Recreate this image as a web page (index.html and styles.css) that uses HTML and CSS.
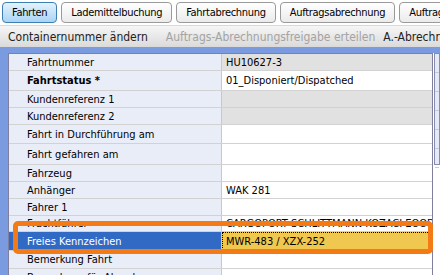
FILE: index.html
```html
<!DOCTYPE html>
<html lang="de">
<head>
    <meta charset="UTF-8">
    <title>Fahrten</title>
    <link rel="stylesheet" href="styles.css">
</head>
<body>
    <div class="app">
        <div class="tabs">
            <div class="tab active">Fahrten</div>
            <div class="tab">Lademittelbuchung</div>
            <div class="tab">Fahrtabrechnung</div>
            <div class="tab">Auftragsabrechnung</div>
            <div class="tab">Auftragsabrechnung</div>
        </div>
        <div class="toolbar">
            <span class="tool">Containernummer ändern</span>
            <span class="sep"></span>
            <span class="tool disabled">Auftrags-Abrechnungsfreigabe erteilen</span>
            <span class="tool">A.-Abrechnung</span>
        </div>
        <div class="frame">
            <div class="grid">
                <div class="row h17"><div class="label">Fahrtnummer</div><div class="value ro">HU10627-3</div></div>
                <div class="row h20"><div class="label bold">Fahrtstatus *</div><div class="value">01_Disponiert/Dispatched</div></div>
                <div class="row h17"><div class="label">Kundenreferenz 1</div><div class="value ro"></div></div>
                <div class="row h17"><div class="label">Kundenreferenz 2</div><div class="value ro"></div></div>
                <div class="row h19"><div class="label">Fahrt in Durchführung am</div><div class="value"></div></div>
                <div class="row h21"><div class="label">Fahrt gefahren am</div><div class="value"></div></div>
                <div class="row h17"><div class="label">Fahrzeug</div><div class="value"></div></div>
                <div class="row h17"><div class="label">Anhänger</div><div class="value">WAK 281</div></div>
                <div class="row h17"><div class="label">Fahrer 1</div><div class="value"></div></div>
                <div class="row h16"><div class="label">Frachtführer</div><div class="value">CARGOPORT SCHLITTMANN KOZACI EOOD</div></div>
                <div class="row h19 selected"><div class="label">Freies Kennzeichen</div><div class="value"><span class="focus">MWR-483 / XZX-252</span></div></div>
                <div class="row h18"><div class="label">Bemerkung Fahrt</div><div class="value"></div></div>
                <div class="row h17"><div class="label">Bemerkung für Abrechnung</div><div class="value"></div></div>
            </div>
            <div class="side-wrap">
                <div class="side">
                    <div class="side-row"></div>
                    <div class="side-row"></div>
                    <div class="side-row"></div>
                    <div class="side-row"></div>
                    <div class="side-row"></div>
                    <div class="side-row"></div>
                </div>
            </div>
        </div>
        <div class="highlight"></div>
    </div>
</body>
</html>
```

FILE: styles.css
```css
body, html {
    margin: 0;
    padding: 0;
    background-color: #ffffff;
    overflow: hidden;
}
.app {
    position: relative;
    width: 440px;
    height: 275px;
    overflow: hidden;
    font-family: "DejaVu Sans Condensed", "Liberation Sans", sans-serif;
    color: #000;
}
.tabs {
    display: flex;
    gap: 4px;
    height: 25px;
    padding: 2px 0 0 2px;
    box-sizing: border-box;
    background-color: #ffffff;
    white-space: nowrap;
}
.tab {
    flex-shrink: 0;
    height: 21px;
    line-height: 20px;
    padding: 0 9px;
    box-sizing: border-box;
    font-size: 11px;
    letter-spacing: -0.3px;
    border: 1px solid #9a9a9a;
    border-radius: 4px;
    background: linear-gradient(#ffffff, #ebebeb);
}
.tab.active {
    border-color: #3c7fb1;
    background: linear-gradient(#e4f2fd, #a9d4f6);
}
.toolbar {
    display: flex;
    align-items: center;
    height: 22px;
    padding-left: 8px;
    box-sizing: border-box;
    font-size: 12px;
    white-space: nowrap;
    background: linear-gradient(#f6f6f6, #dadada);
    border-top: 1px solid #d8d8d8;
}
.tool {
    color: #222;
}
.tool.disabled {
    color: #a3a3a3;
    margin-right: 8px;
}
.sep {
    width: 1px;
    height: 15px;
    background-color: #a0a0a0;
    margin: 0 8px 0 10px;
}
.frame {
    display: flex;
    height: 228px;
    padding: 6px 0 0 8px;
    box-sizing: border-box;
    background-color: #7a9be0;
}
.grid {
    width: 423px;
    flex-shrink: 0;
    border: 1px solid #7f7f9f;
    border-bottom: none;
    background-color: #ffffff;
    font-size: 11px;
}
.row {
    display: flex;
    box-sizing: border-box;
    border-bottom: 1px solid #d2d2d2;
    white-space: nowrap;
}
.h16 { height: 16px; }
.h17 { height: 17px; }
.h18 { height: 18px; }
.h19 { height: 19px; }
.h20 { height: 20px; }
.h21 { height: 21px; }
.label {
    width: 213px;
    flex-shrink: 0;
    display: flex;
    align-items: center;
    padding-left: 18px;
    box-sizing: border-box;
    background-color: #e9edf7;
    border-right: 1px solid #c8c8c8;
}
.label.bold {
    font-weight: bold;
}
.value {
    flex: 1;
    display: flex;
    align-items: center;
    padding-left: 4px;
    overflow: hidden;
}
.value.ro {
    background-color: #e1e1e1;
}
.selected .label {
    background-color: #316ac5;
    color: #ffffff;
}
.selected .value {
    padding: 0;
    background-color: #f0c850;
}
.focus {
    display: flex;
    align-items: center;
    width: 100%;
    height: 100%;
    padding-left: 3px;
    box-sizing: border-box;
    border: 1px dotted #000;
}
.side-wrap {
    flex: 1;
    padding-left: 1px;
    background-color: #ffffff;
}
.side {
    height: 110px;
    border: 1px solid #8a8aac;
    background-color: #e4e9f6;
}
.side-row {
    height: 18px;
    border-bottom: 1px solid #c4cbe0;
}
.highlight {
    position: absolute;
    left: 13px;
    top: 221px;
    width: 420px;
    height: 33px;
    box-sizing: border-box;
    border: 5px solid #f47a16;
    border-radius: 5px;
}
```
